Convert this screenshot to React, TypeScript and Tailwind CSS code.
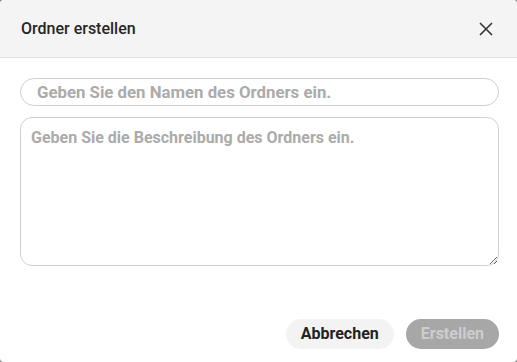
export default function App() {
  return (
    <div className="h-[362px] w-[517px] bg-[#8a8a8a] font-['Roboto',sans-serif]">
      <div className="flex h-full w-full flex-col overflow-hidden rounded-[4px] bg-white">
        <div className="flex h-[58px] shrink-0 items-center justify-between border-b border-[#e2e2e2] bg-[#f4f4f4] pl-[21px] pr-[21px]">
          <span className="text-[16px] font-medium text-[#262626]">Ordner erstellen</span>
          <button className="flex h-5 w-5 items-center justify-center text-[#333]">
            <svg width="14" height="14" viewBox="0 0 14 14" fill="none" stroke="currentColor" strokeWidth="1.6">
              <path d="M1 1L13 13M13 1L1 13" />
            </svg>
          </button>
        </div>
        <div className="flex flex-col gap-[11px] pl-5 pr-[18px] pt-5">
          <input
            className="h-[28px] w-full rounded-full border border-[#cfcfcf] pl-4 pr-4 text-[16.8px] font-bold text-[#333] outline-none placeholder:text-[#ababab]"
            placeholder="Geben Sie den Namen des Ordners ein."
          />
          <textarea
            className="h-[149px] w-full resize-y rounded-[12px] border border-[#cfcfcf] px-[10px] py-[8px] text-[16px] font-bold text-[#333] outline-none placeholder:text-[#ababab]"
            placeholder="Geben Sie die Beschreibung des Ordners ein."
          />
        </div>
        <div className="mt-auto flex justify-end gap-3 pb-[13px] pr-[18px]">
          <button className="h-[30px] rounded-full bg-[#f3f3f3] px-[15px] text-[16px] font-bold text-[#222]">Abbrechen</button>
          <button className="h-[30px] rounded-full bg-[#a7a7a7] px-[15px] text-[16px] font-bold text-[#cdcdcd]">Erstellen</button>
        </div>
      </div>
    </div>
  );
}
